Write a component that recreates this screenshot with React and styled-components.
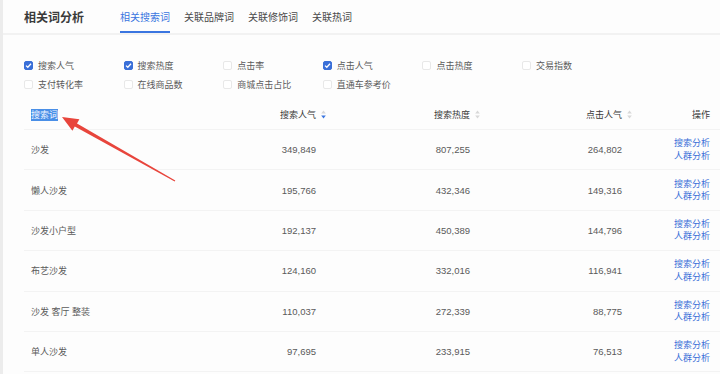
import React from "react";
import styled, { createGlobalStyle, css } from "styled-components";

const GlobalStyle = createGlobalStyle`
  body {
    margin: 0;
    background: #fdfdfd;
    font-family: "Liberation Sans", "Noto Sans CJK SC", sans-serif;
    color: #444;
  }
`;

const tabs = ["相关搜索词", "关联品牌词", "关联修饰词", "关联热词"];

const filters = [
  { label: "搜索人气", checked: true },
  { label: "搜索热度", checked: true },
  { label: "点击率", checked: false },
  { label: "点击人气", checked: true },
  { label: "点击热度", checked: false },
  { label: "交易指数", checked: false },
  { label: "支付转化率", checked: false },
  { label: "在线商品数", checked: false },
  { label: "商城点击占比", checked: false },
  { label: "直通车参考价", checked: false }
];

const rows = [
  ["沙发", "349,849", "807,255", "264,802"],
  ["懒人沙发", "195,766", "432,346", "149,316"],
  ["沙发小户型", "192,137", "450,389", "144,796"],
  ["布艺沙发", "124,160", "332,016", "116,941"],
  ["沙发 客厅 整装", "110,037", "272,339", "88,775"],
  ["单人沙发", "97,695", "233,915", "76,513"]
];

function SortIcon({ active }) {
  return (
    <Sorter>
      <svg width="5" height="9" viewBox="0 0 5 9">
        <path d="M2.5 0.5 L4.8 3.4 H0.2 Z" fill="#d8d8d8" />
        <path d="M2.5 8.5 L4.8 5.6 H0.2 Z" fill={active ? "#3a75e0" : "#d8d8d8"} />
      </svg>
    </Sorter>
  );
}

function Checkbox({ checked }) {
  return (
    <Box $checked={checked}>
      {checked && (
        <svg width="9" height="9" viewBox="0 0 9 9">
          <path d="M2 4.6 L3.8 6.3 L7 2.8" stroke="#fff" strokeWidth="1.3" fill="none" />
        </svg>
      )}
    </Box>
  );
}

export default function App() {
  return (
    <Page>
      <GlobalStyle />
      <Header>
        <Title>相关词分析</Title>
        <Tabs>
          {tabs.map((t, i) => (
            <Tab key={t} $active={i === 0}>{t}</Tab>
          ))}
        </Tabs>
      </Header>

      <Filters>
        {filters.map((f) => (
          <FilterItem key={f.label}>
            <Checkbox checked={f.checked} />
            <span>{f.label}</span>
          </FilterItem>
        ))}
      </Filters>

      <Table>
        <HeadRow>
          <Cell $first>
            <Selected>搜索词</Selected>
          </Cell>
          <HeadCell>
            搜索人气
            <SortIcon active />
          </HeadCell>
          <HeadCell>
            搜索热度
            <SortIcon />
          </HeadCell>
          <HeadCell>
            点击人气
            <SortIcon />
          </HeadCell>
          <Cell $last>操作</Cell>
        </HeadRow>
        {rows.map((r) => (
          <Row key={r[0]}>
            <Cell $first>{r[0]}</Cell>
            <Cell $num>{r[1]}</Cell>
            <Cell $num>{r[2]}</Cell>
            <Cell $num>{r[3]}</Cell>
            <Cell $last>
              <Links>
                <Link>搜索分析</Link>
                <Link>人群分析</Link>
              </Links>
            </Cell>
          </Row>
        ))}
      </Table>

      <Arrow width="200" height="200" viewBox="0 0 200 200">
        <polygon
          points="62,117 79.4,119.2 77,123.4 175.3,180.6 174.7,181.4 74.8,126.6 72.4,130.8"
          fill="#e8453c"
        />
      </Arrow>
    </Page>
  );
}

const Page = styled.div`
  position: relative;
  height: 374px;
  overflow: hidden;
  border-left: 3px solid #ececec;
  background: #fdfdfd;
  display: flex;
  flex-direction: column;
`;

const Header = styled.div`
  height: 33px;
  border-bottom: 2px solid #f2f2f2;
  display: flex;
  align-items: center;
  padding-left: 21px;
`;

const Title = styled.div`
  width: 96px;
  font-size: 12px;
  font-weight: 600;
  color: #3a3a3a;
`;

const Tabs = styled.div`
  display: flex;
  gap: 14px;
  height: 100%;
`;

const Tab = styled.div`
  height: 100%;
  box-sizing: border-box;
  display: flex;
  align-items: center;
  font-size: 10px;
  color: #4a4a4a;
  border-bottom: 2px solid transparent;
  padding-top: 1px;
  ${(p) =>
    p.$active &&
    css`
      color: #3a75e0;
      border-bottom-color: #3a75e0;
    `}
`;

const Filters = styled.div`
  display: grid;
  grid-template-columns: repeat(6, 99.6px);
  grid-auto-rows: 19px;
  padding: 21px 0 6px 21px;
`;

const FilterItem = styled.div`
  display: flex;
  align-items: center;
  gap: 5px;
  font-size: 9px;
  color: #5a5a5a;
`;

const Box = styled.span`
  width: 9px;
  height: 9px;
  box-sizing: border-box;
  border-radius: 2px;
  display: inline-flex;
  border: 1px solid ${(p) => (p.$checked ? "#3a6fd8" : "#e8e8e8")};
  background: ${(p) => (p.$checked ? "#3a6fd8" : "#fff")};
  svg {
    margin: -1px;
  }
`;

const Table = styled.div`
  margin-left: 21px;
  display: flex;
  flex-direction: column;
`;

const rowGrid = css`
  display: grid;
  grid-template-columns: 176px 124px 154px 152px 1fr;
  align-items: center;
  border-bottom: 1px solid #f3f3f3;
  font-size: 9px;
`;

const HeadRow = styled.div`
  ${rowGrid};
  height: 29px;
  color: #3a3a3a;
`;

const Row = styled.div`
  ${rowGrid};
  height: 39.4px;
  color: #5a5a5a;
`;

const Cell = styled.div`
  padding: 0 8px 0 0;
  ${(p) => p.$first && css`padding-left: 7px;`}
  ${(p) =>
    p.$num &&
    css`
      text-align: right;
      font-size: 9.5px;
    `}
  ${(p) =>
    p.$last &&
    css`
      display: flex;
      justify-content: flex-end;
      padding-right: 10px;
    `}
`;

const HeadCell = styled.div`
  display: flex;
  justify-content: flex-end;
  align-items: center;
`;

const Sorter = styled.span`
  display: inline-flex;
  width: 8px;
  justify-content: center;
  margin-left: 3px;
  margin-right: -3px;
`;

const Selected = styled.span`
  background: #4a8fe7;
  color: #eef4ff;
  padding: 1px 0;
`;

const Links = styled.div`
  display: flex;
  flex-direction: column;
  line-height: 12.5px;
`;

const Link = styled.span`
  color: #3a6fd8;
`;

const Arrow = styled.svg`
  position: absolute;
  left: -3px;
  top: 0;
  pointer-events: none;
`;
